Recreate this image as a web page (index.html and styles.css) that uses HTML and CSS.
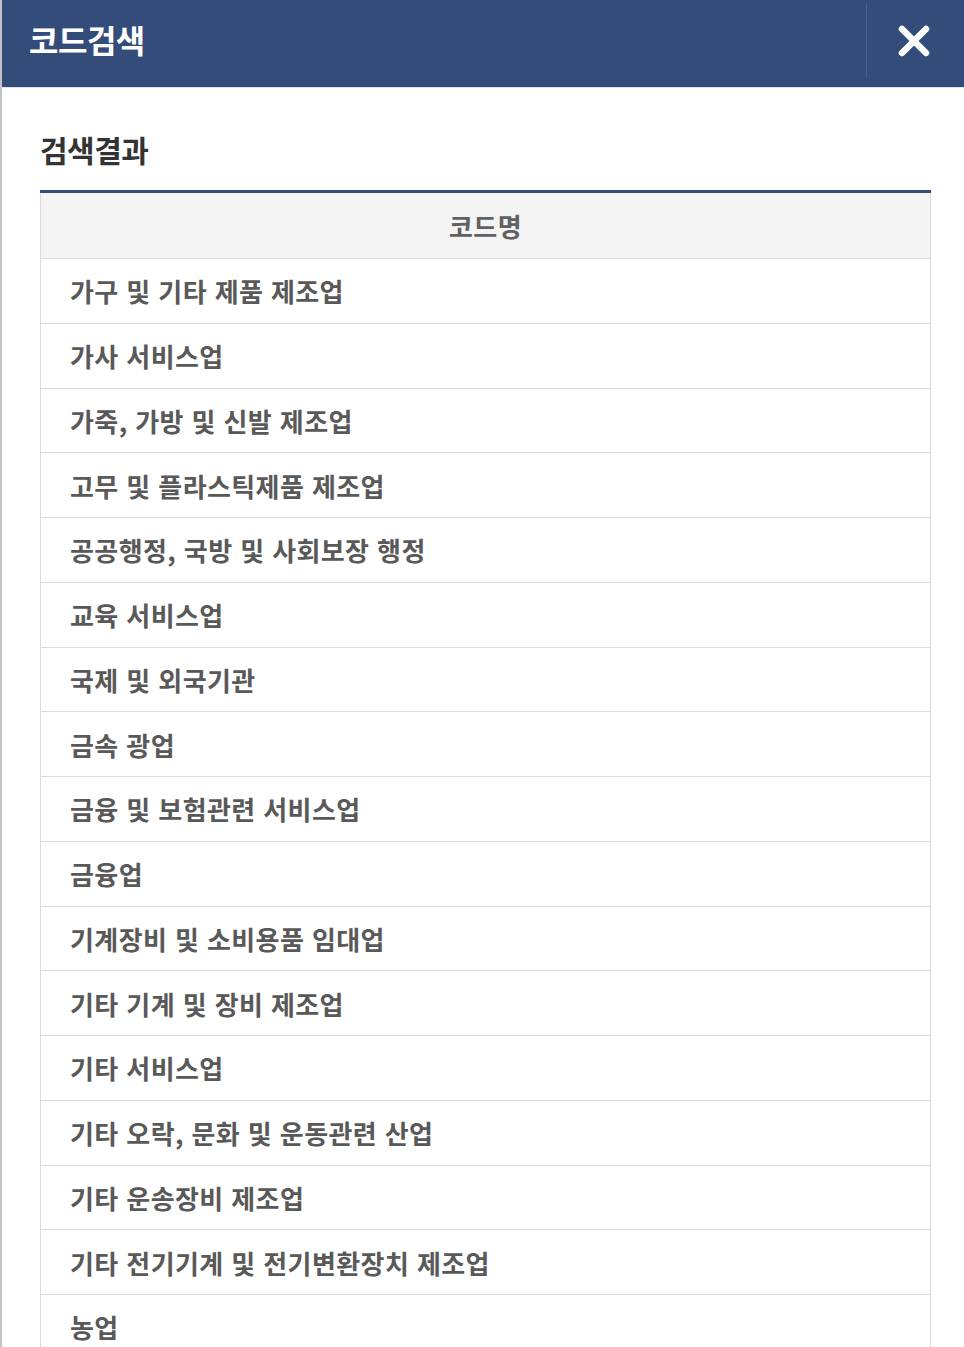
FILE: index.html
```html
<!DOCTYPE html>
<html lang="ko">
<head>
    <meta charset="UTF-8">
    <meta name="viewport" content="width=device-width, initial-scale=1.0">
    <title>코드검색</title>
    <link rel="stylesheet" href="styles.css">
</head>
<body>
<div class="popup">
    <div class="popup-header">
        <h1 class="popup-title">코드검색</h1>
        <button type="button" class="btn-close" aria-label="닫기">
            <svg width="34" height="34" viewBox="0 0 34 34">
                <path d="M5 5 L29 29 M29 5 L5 29" stroke="#fff" stroke-width="6.5" stroke-linecap="round"/>
            </svg>
        </button>
    </div>
    <div class="popup-body">
        <h2 class="result-title">검색결과</h2>
        <table class="result-table">
            <thead>
                <tr><th>코드명</th></tr>
            </thead>
            <tbody>
                <tr><td>가구 및 기타 제품 제조업</td></tr>
                <tr><td>가사 서비스업</td></tr>
                <tr><td>가죽, 가방 및 신발 제조업</td></tr>
                <tr><td>고무 및 플라스틱제품 제조업</td></tr>
                <tr><td>공공행정, 국방 및 사회보장 행정</td></tr>
                <tr><td>교육 서비스업</td></tr>
                <tr><td>국제 및 외국기관</td></tr>
                <tr><td>금속 광업</td></tr>
                <tr><td>금융 및 보험관련 서비스업</td></tr>
                <tr><td>금융업</td></tr>
                <tr><td>기계장비 및 소비용품 임대업</td></tr>
                <tr><td>기타 기계 및 장비 제조업</td></tr>
                <tr><td>기타 서비스업</td></tr>
                <tr><td>기타 오락, 문화 및 운동관련 산업</td></tr>
                <tr><td>기타 운송장비 제조업</td></tr>
                <tr><td>기타 전기기계 및 전기변환장치 제조업</td></tr>
                <tr><td>농업</td></tr>
            </tbody>
        </table>
    </div>
</div>
</body>
</html>
```

FILE: styles.css
```css
html, body {
    margin: 0;
    padding: 0;
    background: #fff;
    font-family: "Noto Sans CJK KR", "Noto Sans", sans-serif;
}
.popup {
    border-left: 2px solid #c4c4c4;
    min-height: 1347px;
    box-sizing: border-box;
}
.popup-header {
    display: flex;
    align-items: stretch;
    height: 87px;
    background-color: #334c7a;
    border-bottom: 1px solid #e2e2e2;
}
.popup-title {
    flex: 1;
    margin: 0;
    padding-left: 27px;
    color: #fff;
    font-size: 32px;
    font-weight: 700;
    line-height: 78px;
    letter-spacing: -0.5px;
}
.btn-close {
    width: 98px;
    margin: 3px 0 9px;
    padding: 0 4px 0 0;
    border: none;
    border-left: 1px solid #475f8c;
    background: transparent;
    display: flex;
    justify-content: center;
    align-items: center;
    cursor: pointer;
}
.popup-body {
    padding: 40px 33px 0 38px;
}
.result-title {
    margin: 0 0 20px;
    color: #333;
    font-size: 30px;
    font-weight: 700;
    line-height: 42px;
    letter-spacing: -0.5px;
}
.result-table {
    width: 100%;
    border-collapse: collapse;
    border-top: 3px solid #334c7a;
}
.result-table th,
.result-table td {
    border: 1px solid #dcdcdc;
    border-top: none;
    box-sizing: border-box;
    padding: 0 29px;
    font-size: 26px;
    letter-spacing: 0.4px;
    color: #595959;
}
.result-table th {
    height: 67px;
    background: #f4f4f4;
    font-weight: 700;
    text-align: center;
    color: #616161;
}
.result-table td {
    height: 64.75px;
    font-weight: 600;
    text-align: left;
}
```
